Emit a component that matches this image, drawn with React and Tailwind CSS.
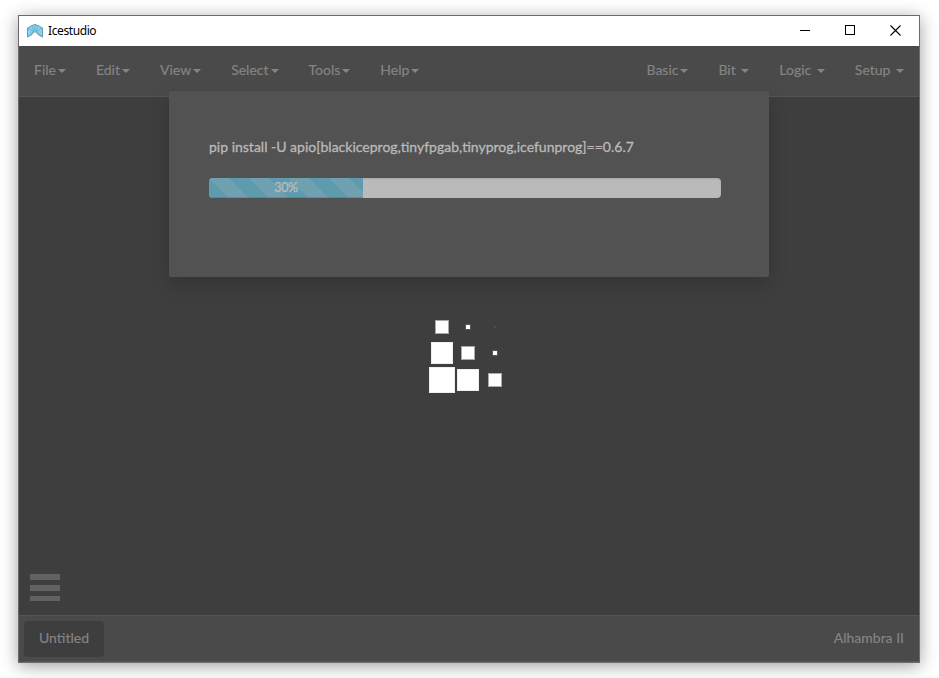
const leftMenus = ["File", "Edit", "View", "Select", "Tools", "Help"];
const rightMenus = ["Basic", "Bit ", "Logic ", "Setup "];

function Menu({ label }) {
  return (
    <div className="flex items-center whitespace-pre">
      <span>{label}</span>
      <span className="ml-[2px] mt-[3px] h-0 w-0 border-x-4 border-t-4 border-x-transparent border-t-[#858585]" />
    </div>
  );
}

function Logo() {
  return (
    <svg className="-mt-px" width="16" height="14" viewBox="0 0 16 14">
      <path d="M.5 4 5 1.500 8 .5l3 1L15.500 4v9L11 10.500 9.500 8h-3L5 10.500.5 13Z" fill="#83d6f5" stroke="#6d8d9b" strokeWidth=".9" />
      <path d="M.5 4 6.500 7.500 5 1.500M15.500 4l-6 3.500L11 1.500M8 .5v4M.5 13l6-5.500M15.500 13l-6-5.500M6.500 7.500 8 4.500l1.500 3" fill="none" stroke="#5ba3bf" strokeWidth=".6" />
    </svg>
  );
}

function Cube({ size }) {
  return <span className={size} />;
}

const big = "h-[26px] w-[26px] border border-[#eeeeee] bg-white";
const large = "h-[22px] w-[22px] border border-[#eeeeee] bg-white";
const medium = "h-[14px] w-[14px] border border-[#a8a8a8] bg-white";
const small = "h-[6px] w-[6px] border border-[#555555] bg-white";
const dot = "h-[2px] w-[2px] bg-[#4d4d4d]";
const cubes = [medium, small, dot, large, medium, small, big, large, medium];

export default function App() {
  return (
    <div className="h-[678px] w-[939px] overflow-hidden bg-white pl-[18px] pt-[15px] font-['Lato',sans-serif]">
      <div className="relative flex h-[648px] w-[902px] flex-col border border-[#6b6b6b] bg-[#3e3e3e] shadow-[0_3px_16px_rgba(0,0,0,0.38)]">
        <header className="flex h-[30px] shrink-0 items-center bg-white pl-2 text-black">
          <Logo />
          <span className="ml-[5px] font-['Noto_Sans',sans-serif] text-[12px] leading-4 tracking-[-0.4px]">Icestudio</span>
          <div className="mb-auto ml-auto mr-[18px] flex items-start gap-[35px] pt-[9px]">
            <svg width="10" height="10" shapeRendering="crispEdges"><path d="M0 5.500h10" stroke="black" /></svg>
            <svg width="10" height="10" shapeRendering="crispEdges"><path d="M.5.5h9v9h-9z" fill="none" stroke="black" /></svg>
            <svg width="11" height="11"><path d="m.5.5 10 10m0-10-10 10" stroke="black" strokeWidth="1.100" /></svg>
          </div>
        </header>
        <nav className="flex h-[51px] shrink-0 justify-between border-b border-[#555555] bg-[#4a4a4a] px-[15px] pb-[3px] text-[14px] text-[#858585] [-webkit-text-stroke:0.15px_#858585]">
          <div className="flex gap-[30px]">
            {leftMenus.map((label) => <Menu key={label} label={label} />)}
          </div>
          <div className="flex gap-[30px]">
            {rightMenus.map((label) => <Menu key={label} label={label} />)}
          </div>
        </nav>
        <main className="flex grow flex-col justify-end pb-[14px] pl-[11px]">
          <div className="flex flex-col">
            <span className="h-[6px] w-[30px] bg-[#626262]" />
            <span className="mt-[5px] h-[6px] w-[30px] bg-[#626262]" />
            <span className="mt-[5px] h-[5px] w-[30px] bg-[#626262]" />
          </div>
        </main>
        <footer className="flex h-[47px] shrink-0 items-start justify-between border-y border-[#555555] bg-[#4a4a4a] pl-[5px] pr-[15px] pt-[5px] text-[14px] text-[#858585] [-webkit-text-stroke:0.15px_#858585]">
          <div className="flex h-9 w-20 items-center justify-center rounded-[4px] bg-[#3e3e3e] pb-[3px]">Untitled</div>
          <div className="flex h-9 items-center pb-[3px]">Alhambra II</div>
        </footer>

        <section className="absolute left-[150px] top-[75px] h-[186px] w-[600px] rounded-[2px] bg-[#525252] px-10 pt-[45px] shadow-[0_8px_20px_rgba(0,0,0,0.16)]">
          <p className="whitespace-nowrap text-[14px] leading-[21px] text-[#bababa] [-webkit-text-stroke:0.3px_#bababa]">pip install -U apio[blackiceprog,tinyfpgab,tinyprog,icefunprog]==0.6.7</p>
          <div className="mt-[21px] h-5 w-[512px] overflow-hidden rounded-[4px] bg-[#bababa] shadow-[inset_0_1px_2px_rgba(0,0,0,0.1)]">
            <div className="h-full w-[154px] bg-[#5f9bae] bg-[linear-gradient(45deg,rgba(186,186,186,0.18)_25%,transparent_25%,transparent_50%,rgba(186,186,186,0.18)_50%,rgba(186,186,186,0.18)_75%,transparent_75%)] bg-[length:40px_40px] text-center text-[12.5px] leading-5 tracking-[-0.3px] text-[#bababa] shadow-[inset_0_-1px_0_rgba(0,0,0,0.12)] [-webkit-text-stroke:0.4px_#bababa]">30%</div>
          </div>
        </section>

        <div className="absolute left-[410px] top-[298px] grid grid-cols-[26px_26px_28px] grid-rows-[26px_26px_28px] place-items-center">
          {cubes.map((size, i) => <Cube key={i} size={size} />)}
        </div>
      </div>
    </div>
  );
}
